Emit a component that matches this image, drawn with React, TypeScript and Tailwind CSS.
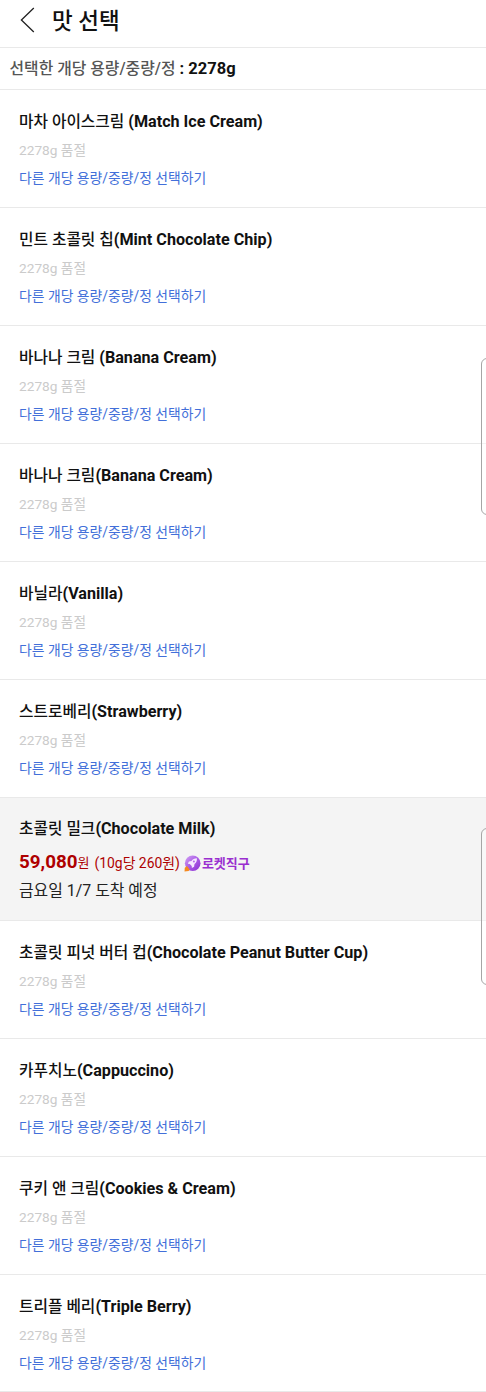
interface Flavor {
    name: string,
    label: string,
    price?: string,
    unitPrice?: string,
    arrival?: string,
}

const flavors: Flavor[] = [
    { name: "마차 아이스크림 ", label: "(Match Ice Cream)" },
    { name: "민트 초콜릿 칩", label: "(Mint Chocolate Chip)" },
    { name: "바나나 크림 ", label: "(Banana Cream)" },
    { name: "바나나 크림", label: "(Banana Cream)" },
    { name: "바닐라", label: "(Vanilla)" },
    { name: "스트로베리", label: "(Strawberry)" },
    { name: "초콜릿 밀크", label: "(Chocolate Milk)", price: "59,080", unitPrice: "(10g당 260원)", arrival: "금요일 1/7 도착 예정" },
    { name: "초콜릿 피넛 버터 컵", label: "(Chocolate Peanut Butter Cup)" },
    { name: "카푸치노", label: "(Cappuccino)" },
    { name: "쿠키 앤 크림", label: "(Cookies & Cream)" },
    { name: "트리플 베리", label: "(Triple Berry)" },
];

const RocketIcon = () => (
    <svg width="17" height="17" viewBox="0 0 17 17" className="shrink-0">
        <defs>
            <linearGradient id="globe" x1="0" y1="0" x2="1" y2="1">
                <stop offset="0" stopColor="#d3a4f5" />
                <stop offset="0.5" stopColor="#ab5ce6" />
                <stop offset="1" stopColor="#8a2fd0" />
            </linearGradient>
        </defs>
        <circle cx="8.7" cy="8.2" r="7.8" fill="url(#globe)" />
        <path d="M12.9 3.2c-2.6 0-4.2 1-5.4 2.8l-2.6.5L3.8 8.7l2 .3 1.9 1.9.2 2.2 2.2-1.3.4-2.7c1.7-1.3 2.6-3 2.4-5.9z" fill="#f6e9ff" />
        <circle cx="9.9" cy="6.4" r="1" fill="#b56aea" />
        <path d="M3 11 .8 12.8.5 16.5l4.2-.4 1-1.5z" fill="#f58a1f" />
    </svg>
);

const FlavorName = ({ flavor }: { flavor: Flavor }) => (
    <p className="whitespace-pre text-[15.75px] font-medium leading-[20px] text-[#111]">
        {flavor.name}
        <span className="text-[16.15px] font-bold">{flavor.label}</span>
    </p>
);

const SoldOut = () => (
    <>
        <p className="mt-[9px] text-[13.7px] leading-[18px] text-[#cbcbcb]">2278g 품절</p>
        <a className="mt-[10.4px] block text-[13.85px] leading-[18px] text-[#426fd9]">다른 개당 용량/중량/정 선택하기</a>
    </>
);

const FlavorRow = ({ flavor }: { flavor: Flavor }) => {
    if (flavor.price) {
        return (
            <li className="h-[123px] border-b border-[#e9e9e9] bg-[#f4f4f4] px-[19px] pt-[21px]">
                <FlavorName flavor={flavor} />
                <div className="mt-[11px] flex h-[24px] items-center text-[#ae0000]">
                    <span className="text-[18.8px] font-bold leading-[24px]">{flavor.price}</span>
                    <span className="pt-[2px] text-[13px]">원</span>
                    <span className="ml-[5px] pt-[3px] text-[13.9px]">{flavor.unitPrice}</span>
                    <span className="ml-[4px] flex items-center gap-[1px] pt-[3px] text-[13px] font-bold text-[#9a2fd0]">
                        <RocketIcon />
                        로켓직구
                    </span>
                </div>
                <p className="mt-[7px] text-[15.9px] leading-[20px] text-[#222]">{flavor.arrival}</p>
            </li>
        );
    }

    return (
        <li className="h-[118px] border-b border-[#e9e9e9] px-[19px] pt-[22px] last:h-[117px]">
            <FlavorName flavor={flavor} />
            <SoldOut />
        </li>
    );
};

export default function App() {
    return (
        <div className="relative h-[1392px] w-[486px] overflow-hidden whitespace-nowrap bg-white font-[Roboto,'Noto_Sans_CJK_KR',sans-serif]">
            <header className="flex h-[48px] items-center border-b border-[#e9e9e9] pb-[7px] pl-[20px]">
                <svg width="15" height="26" viewBox="0 0 15 26" fill="none" stroke="#222" strokeWidth="1.3">
                    <path d="M13.8 1 1.4 13l12.4 12" />
                </svg>
                <h1 className="ml-[17px] pt-[2px] text-[22.5px] font-medium leading-[30px] text-[#111]">맛 선택</h1>
            </header>
            <div className="flex h-[42px] items-center border-b border-[#e9e9e9] pl-[9.5px] pt-[2px] text-[15.85px]">
                <p className="text-[16.5px] font-bold text-[#111]"><span className="text-[15.85px] font-medium text-[#555]">선택한 개당 용량/중량/정</span> : 2278g</p>
            </div>
            <ul>
                {flavors.map((flavor) => <FlavorRow key={flavor.name} flavor={flavor} />)}
            </ul>
            <div className="absolute left-[481px] top-[358px] h-[157px] w-[20px] rounded-[6px] border border-[#a6a6a6] bg-white/40" />
            <div className="absolute left-[481px] top-[828px] h-[157px] w-[20px] rounded-[6px] border border-[#a6a6a6] bg-white/40" />
        </div>
    );
}
